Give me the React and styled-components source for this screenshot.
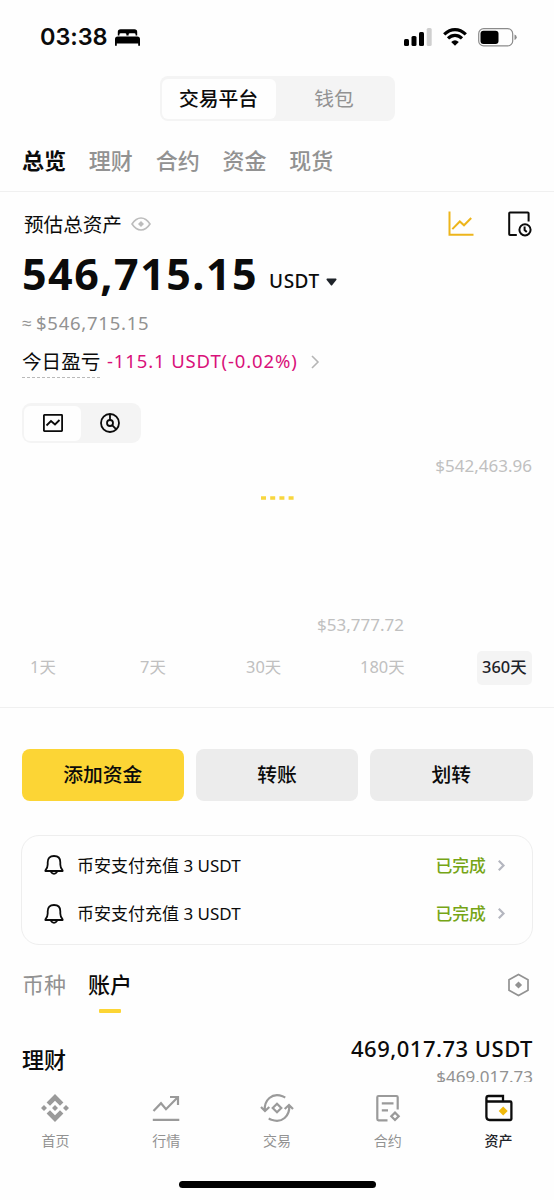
import React from "react";
import styled, { createGlobalStyle } from "styled-components";

const latin = `"Noto Sans", "Noto Sans CJK SC", sans-serif`;
const han = `"Noto Sans CJK SC", sans-serif`;

const GlobalStyle = createGlobalStyle`
  * { box-sizing: border-box; }
  body { margin: 0; background: #fefefe; color: #0b0b0b; font-family: ${han}; }
  svg { display: block; flex: none; overflow: visible; }
`;

const Screen = styled.div`
  width: 554px;
  height: 1200px;
  overflow: hidden;
  display: flex;
  flex-direction: column;
  background: #fefefe;
`;

const Label = styled.span`
  font-family: ${han};
  font-size: ${(p) => p.$size}px;
  font-weight: ${(p) => p.$weight || 400};
  color: ${(p) => p.$color || "#0b0b0b"};
  line-height: 1;
  white-space: nowrap;
`;

const Figure = styled(Label)`
  font-family: ${latin};
  letter-spacing: ${(p) => p.$track || 0}px;
`;

const Approx = styled.span`
  width: 14px;
  font: 400 17px/1 "Liberation Sans", sans-serif;
  color: #929292;
`;

const Unit = styled.div`
  display: flex;
  align-items: center;
  gap: 6px;
  padding-top: 16px;
`;

const StatusBar = styled.header`
  height: 76px;
  flex: none;
  padding: 0 37px 2px 40px;
  display: flex;
  align-items: center;
  justify-content: space-between;
`;

const StatusGroup = styled.div`
  display: flex;
  align-items: center;
  gap: ${(p) => p.$gap}px;
`;

const Clock = styled.span`
  font: 600 23.5px/1 Inter, sans-serif;
  letter-spacing: -0.1px;
`;

const Segment = styled.div`
  width: 235px;
  height: 45px;
  flex: none;
  margin-left: 159.5px;
  padding: 2.5px;
  display: grid;
  grid-template-columns: 114px 1fr;
  border-radius: 8px;
  background: #f4f4f4;
`;

const SegmentItem = styled.div`
  display: flex;
  align-items: center;
  justify-content: center;
  padding: 0 ${(p) => (p.$active ? 1 : 0)}px 2px 0;
  border-radius: 6px;
  background: ${(p) => (p.$active ? "#fefefe" : "transparent")};
`;

const TopTabs = styled.nav`
  height: 71px;
  flex: none;
  padding: 5px 22px 0;
  display: flex;
  align-items: center;
  gap: 22.8px;
  border-bottom: 1px solid #f0f0f0;
`;

const Row = styled.div`
  height: ${(p) => p.$h}px;
  flex: none;
  padding: ${(p) => p.$top || 0}px 22px 0;
  display: flex;
  align-items: center;
`;

const Push = styled.div`
  margin-left: auto;
  padding-top: ${(p) => p.$top || 0}px;
  display: flex;
  align-items: center;
  gap: ${(p) => p.$gap || 0}px;
`;

const Gap = styled.span`
  width: ${(p) => p.$w}px;
  flex: none;
`;

const Underlined = styled.div`
  height: 33px;
  width: 78px;
  display: flex;
  align-items: center;
  border-bottom: 1px dashed #b9b9b9;
`;

const ViewToggle = styled.div`
  width: 119px;
  height: 40px;
  flex: none;
  margin: 25px 0 0 21.5px;
  padding: 2.5px;
  display: grid;
  grid-template-columns: 57px 1fr;
  border-radius: 9px;
  background: #f4f4f4;
`;

const ToggleItem = styled.div`
  display: flex;
  align-items: center;
  justify-content: center;
  border-radius: 6px;
  background: ${(p) => (p.$active ? "#fefefe" : "transparent")};
`;

const Chart = styled.section`
  height: 207.5px;
  flex: none;
  padding: 14px 22px 18px;
  display: flex;
  flex-direction: column;
`;

const ChartMax = styled.div`
  display: flex;
  justify-content: flex-end;
`;

const ChartLine = styled.div`
  flex: 1;
  padding: 22px 0 0 238px;
`;

const ChartMin = styled.div`
  display: flex;
  padding-left: 295px;
`;

const Ranges = styled.div`
  height: 57.5px;
  flex: none;
  padding: 0 21px 0 25px;
  display: grid;
  grid-template-columns: 110px 106px 114px 122px 1fr;
  align-items: start;
  justify-items: start;
  border-bottom: 1px solid #f0f0f0;
`;

const Range = styled.div`
  height: 34px;
  padding: 0 5px;
  display: flex;
  align-items: center;
  border-radius: 5px;
  background: ${(p) => (p.$active ? "#f4f4f4" : "transparent")};
`;

const Actions = styled.div`
  flex: none;
  margin: 41px 21.5px 33.5px;
  display: grid;
  grid-template-columns: repeat(3, 1fr);
  gap: 11.5px;
`;

const ActionButton = styled.button`
  height: 52px;
  padding: 0 0 2px;
  border: 0;
  border-radius: 8px;
  background: ${(p) => (p.$primary ? "#fcd535" : "#ececec")};
`;

const Notices = styled.section`
  height: 110px;
  flex: none;
  margin: 0 21px;
  padding: 5.5px 28px 5.5px 20px;
  border: 1.5px solid #eeeeee;
  border-radius: 18px;
`;

const Notice = styled.div`
  height: 48.5px;
  display: flex;
  align-items: center;
`;

const AccountTabs = styled.nav`
  height: 70px;
  flex: none;
  padding: 26px 24px 0 22px;
  display: flex;
  align-items: flex-start;
  gap: 22px;
`;

const AccountTab = styled.div`
  height: 42px;
  padding-top: 1px;
  display: flex;
  flex-direction: column;
  align-items: center;
  justify-content: space-between;
`;

const Marker = styled.i`
  width: 22px;
  height: 4px;
  border-radius: 1px;
  background: #fcd535;
`;

const Holding = styled.div`
  height: 67px;
  flex: none;
  padding: 22px 21px 0 22px;
  display: flex;
  justify-content: space-between;
  overflow: hidden;
`;

const HoldingName = styled.div`
  padding-top: 10px;
`;

const HoldingValue = styled.div`
  display: flex;
  flex-direction: column;
  align-items: flex-end;
  gap: 9px;
`;

const BottomNav = styled.nav`
  height: 99px;
  flex: none;
  display: grid;
  grid-template-columns: repeat(5, 1fr);
  background: #fefefe;
`;

const NavItem = styled.div`
  padding-top: 11px;
  display: flex;
  flex-direction: column;
  align-items: center;
  gap: 10px;
`;

const HomeBar = styled.div`
  width: 197px;
  height: 7px;
  flex: none;
  align-self: center;
  border-radius: 4px;
  background: #000;
`;

const BedIcon = () => (
  <svg width="25" height="17" viewBox="0 0 25 17" fill="#000">
    <path d="M2.8 6.4V3Q2.8 .2 5.6 .2H19.4Q22.2 .2 22.2 3V6.4H20.6V5.6Q20.6 4.2 19.2 4.2H15Q13.6 4.2 13.6 5.6V6.4H11.4V5.6Q11.4 4.2 10 4.2H5.8Q4.4 4.2 4.4 5.6V6.4Z" />
    <path d="M0 10.2Q0 7.6 2.6 7.6H22.4Q25 7.6 25 10.2V16.8H23.2V14.6H1.8V16.8H0Z" />
  </svg>
);

const SignalIcon = () => (
  <svg width="28" height="18" viewBox="0 0 28 18">
    <rect x="0" y="11" width="5" height="7" rx="1.5" />
    <rect x="7.5" y="8" width="5" height="10" rx="1.5" />
    <rect x="15" y="4" width="5" height="14" rx="1.5" />
    <rect x="22.7" y="0" width="5" height="18" rx="1.5" fill="#cfcfcf" />
  </svg>
);

const WifiIcon = () => (
  <svg width="24" height="18" viewBox="0 0 24 18" fill="none" stroke="#000" strokeWidth="3.2">
    <path d="M1.2 6.3Q6.2 1.6 12 1.6T22.8 6.3" />
    <path d="M5 10.4Q8.2 7.4 12 7.4T19 10.4" />
    <path d="M8.2 14Q12 10.7 15.8 14L12 17.8Z" fill="#000" stroke="none" />
  </svg>
);

const BatteryIcon = () => (
  <svg width="39" height="19" viewBox="0 0 39 19">
    <rect x=".7" y=".7" width="34" height="17.2" rx="5" fill="none" stroke="#8b8b8b" strokeWidth="1.2" />
    <rect x="2.5" y="2.7" width="18" height="13.2" rx="3" />
    <path d="M36.5 6.5Q38.7 7.3 38.7 9.3T36.5 12Z" fill="#8b8b8b" />
  </svg>
);

const EyeIcon = () => (
  <svg width="20" height="14" viewBox="0 0 20 14" fill="none" stroke="#bcbcbc" strokeWidth="1.6">
    <path d="M1 7Q5 1 10 1T19 7Q15 13 10 13T1 7Z" />
    <path d="M10 4L13 7L10 10L7 7Z" fill="#bcbcbc" stroke="none" />
  </svg>
);

const LineChartIcon = () => (
  <svg width="26" height="26" viewBox="0 0 26 26" fill="none" stroke="#edb51c" strokeWidth="2">
    <path d="M1.5 .5V23.7H25.5M4.3 18.1L11.8 10.5L16 14.3L23.2 7" />
  </svg>
);

const HistoryIcon = () => (
  <svg width="24" height="26" viewBox="0 0 24 26" fill="none" stroke="#0b0b0b" strokeWidth="2">
    <path d="M8.8 24H2Q1.2 24 1.2 23.2V2.3Q1.2 1.5 2 1.5H19.8Q20.6 1.5 20.6 2.3V10.5" />
    <circle cx="17" cy="18.8" r="5.6" />
    <path d="M16.6 15.5V19.1L18.8 21.1" />
  </svg>
);

const Caret = () => (
  <svg width="11" height="8" viewBox="0 0 11 8" fill="#1e2329">
    <path d="M1 .5H10Q11 1 10.3 2L6.3 7Q5.5 8 4.7 7L.7 2Q0 1 1 .5Z" />
  </svg>
);

const Chevron = ({ h, color, weight }) => (
  <svg width={h * 0.57} height={h} viewBox="0 0 8 14" fill="none" stroke={color} strokeWidth={weight}>
    <path d="M1 1L7 7L1 13" />
  </svg>
);

const BoxChartIcon = () => (
  <svg width="20" height="18" viewBox="0 0 20 18" fill="none" stroke="#0b0b0b" strokeWidth="1.8">
    <rect x=".9" y=".9" width="18.2" height="16.2" rx=".5" />
    <path d="M3.5 11.5L8 7L12 10.5L16.5 6" />
  </svg>
);

const PieIcon = () => (
  <svg width="20" height="20" viewBox="0 0 20 20" fill="none" stroke="#0b0b0b" strokeWidth="1.8">
    <circle cx="10" cy="10" r="9" />
    <circle cx="10" cy="10" r="3" />
    <path d="M10 1V7M12.1 12.1L16.3 16.4" />
  </svg>
);

const BellIcon = () => (
  <svg width="20" height="20" viewBox="0 0 20 20" fill="none" stroke="#0b0b0b" strokeWidth="1.8" strokeLinejoin="round">
    <path d="M1.4 15.3Q3.7 13 3.7 9.5V7.2Q3.7 1 10 1T16.3 7.2V9.5Q16.3 13 18.6 15.3V16H1.4Z" />
    <path d="M6.5 16.3Q10 21.5 13.5 16.3" />
  </svg>
);

const HexIcon = () => (
  <svg width="22" height="24" viewBox="0 0 22 24" fill="none" stroke="#929292" strokeWidth="1.7">
    <path d="M10.5 1.5L20 6.7V17.3L10.5 22.5L1 17.3V6.7Z" />
    <path d="M10.5 8.4L14.1 12L10.5 15.6L6.9 12Z" fill="#929292" stroke="none" />
  </svg>
);

const HomeIcon = () => (
  <svg width="28" height="30" viewBox="0 0 28 30" fill="#9a9a9a">
    <path d="M14 1L22.4 9.4L19 12.8L14 7.8L9 12.8L5.6 9.4ZM14 29L22.4 20.6L19 17.2L14 22.2L9 17.2L5.6 20.6ZM0 15L3 12L6 15L3 18ZM11 15L14 12L17 15L14 18ZM22 15L25 12L28 15L25 18Z" />
  </svg>
);

const MarketIcon = () => (
  <svg width="28" height="30" viewBox="0 0 28 30" fill="none" stroke="#9a9a9a" strokeWidth="2.2">
    <path d="M1.5 18L9 10.2L14 16.2L25.5 4.5M18 4H26V12M.8 26.8H27.3" />
  </svg>
);

const TradeIcon = () => (
  <svg width="34" height="30" viewBox="0 0 34 30" fill="none" stroke="#9a9a9a" strokeWidth="2.2">
    <path d="M4.8 17.5Q4.2 9.5 9.4 5T22.5 3.2Q24 3.8 25.2 4.7M1 14L5 18L9.3 14" />
    <path d="M29.2 12.5Q29.8 20.5 24.6 25T11.5 26.8Q10 26.2 8.8 25.3M24.7 16L29 12L33 16" />
    <path d="M17 10.7L21.3 15L17 19.3L12.7 15Z" />
  </svg>
);

const ContractIcon = () => (
  <svg width="28" height="30" viewBox="0 0 28 30" fill="none" stroke="#9a9a9a" strokeWidth="2.2">
    <path d="M13.5 27.3H4.5Q3.3 27.3 3.3 26.1V4.2Q3.3 3 4.5 3H22.5Q23.7 3 23.7 4.2V16.5M7.8 10.3H19.5M7.8 17.3H14" />
    <path d="M21 19.6L24.7 23.3L21 27L17.3 23.3Z" />
  </svg>
);

const WalletIcon = () => (
  <svg width="28" height="30" viewBox="0 0 28 30" fill="none" stroke="#0b0b0b" strokeWidth="2.3">
    <path d="M1.4 9V5.2Q1.4 3 3.6 3H18V8.5M1.4 6.5Q1.4 8.5 3.6 8.5H25.2Q26.4 8.5 26.4 9.7V26Q26.4 27 25.4 27H4.6Q1.4 27 1.4 23.8V6" />
    <path d="M18.2 13.5L22.7 18L18.2 22.5L13.7 18Z" fill="#f0b90b" stroke="none" />
  </svg>
);

const gray = "#929292";
const pale = "#c0c0c0";
const topTabs = ["总览", "理财", "合约", "资金", "现货"];
const ranges = ["1天", "7天", "30天", "180天", "360天"];
const navItems = [
  ["首页", HomeIcon],
  ["行情", MarketIcon],
  ["交易", TradeIcon],
  ["合约", ContractIcon],
  ["资产", WalletIcon],
];

export default function App() {
  return (
    <Screen>
      <GlobalStyle />
      <StatusBar>
        <StatusGroup $gap={8}>
          <Clock>03:38</Clock>
          <BedIcon />
        </StatusGroup>
        <StatusGroup $gap={11}>
          <SignalIcon />
          <WifiIcon />
          <BatteryIcon />
        </StatusGroup>
      </StatusBar>

      <Segment>
        <SegmentItem $active>
          <Label $size={19.8} $weight={500}>交易平台</Label>
        </SegmentItem>
        <SegmentItem>
          <Label $size={19.8} $color={gray}>钱包</Label>
        </SegmentItem>
      </Segment>

      <TopTabs>
        {topTabs.map((t, i) => (
          <Label key={t} $size={22} $weight={i ? 500 : 700} $color={i ? gray : undefined}>{t}</Label>
        ))}
      </TopTabs>

      <Row $h={64}>
        <Gap $w={2} />
        <Label $size={19.6}>预估总资产</Label>
        <Gap $w={9} />
        <EyeIcon />
        <Push $gap={34}>
          <LineChartIcon />
          <HistoryIcon />
        </Push>
      </Row>
      <Row $h={35}>
        <Figure $size={43} $weight={700} $track={1.5}>546,715.15</Figure>
        <Gap $w={11} />
        <Unit>
          <Figure $size={19} $weight={500} $track={0.5}>USDT</Figure>
          <Caret />
        </Unit>
      </Row>
      <Row $h={54} $top={11}>
        <Approx>≈</Approx>
        <Figure $size={18.5} $color={gray} $track={0.75}>$546,715.15</Figure>
      </Row>
      <Row $h={33}>
        <Underlined>
          <Label $size={19.6}>今日盈亏</Label>
        </Underlined>
        <Gap $w={7} />
        <Figure $size={18.5} $color="#d9117a" $track={0.87}>-115.1 USDT(-0.02%)</Figure>
        <Gap $w={13.5} />
        <Chevron h={14} color="#b5b5b5" weight={1.6} />
      </Row>

      <ViewToggle>
        <ToggleItem $active><BoxChartIcon /></ToggleItem>
        <ToggleItem><PieIcon /></ToggleItem>
      </ViewToggle>

      <Chart>
        <ChartMax><Figure $size={17} $color={pale}>$542,463.96</Figure></ChartMax>
        <ChartLine>
          <svg width="34" height="4" viewBox="0 0 34 4">
            <path d="M1 2H34" fill="none" stroke="#f8d63e" strokeWidth="3.5" strokeDasharray="5 4.2" />
          </svg>
        </ChartLine>
        <ChartMin><Figure $size={17} $color={pale}>$53,777.72</Figure></ChartMin>
      </Chart>

      <Ranges>
        {ranges.map((r, i) => (
          <Range key={r} $active={i === 4}>
            <Figure $size={16.4} $weight={i === 4 ? 500 : 400} $color={i === 4 ? "#1e2329" : pale}>{r}</Figure>
          </Range>
        ))}
      </Ranges>

      <Actions>
        <ActionButton $primary><Label $size={19.8} $weight={500}>添加资金</Label></ActionButton>
        <ActionButton><Label $size={19.8} $weight={500}>转账</Label></ActionButton>
        <ActionButton><Label $size={19.8} $weight={500}>划转</Label></ActionButton>
      </Actions>

      <Notices>
        {[0, 1].map((n) => (
          <Notice key={n}>
            <Gap $w={2} />
            <BellIcon />
            <Gap $w={13} />
            <Figure $size={17}>币安支付充值 3 USDT</Figure>
            <Push $gap={12}>
              <Label $size={16.8} $weight={500} $color="#76a516">已完成</Label>
              <Chevron h={11} color="#b4b6bf" weight={2.8} />
            </Push>
          </Notice>
        ))}
      </Notices>

      <AccountTabs>
        <AccountTab><Label $size={22} $color={gray}>币种</Label></AccountTab>
        <AccountTab>
          <Label $size={22} $weight={500}>账户</Label>
          <Marker />
        </AccountTab>
        <Push $top={2}><HexIcon /></Push>
      </AccountTabs>

      <Holding>
        <HoldingName><Label $size={22} $weight={500}>理财</Label></HoldingName>
        <HoldingValue>
          <Figure $size={22} $weight={500} $track={0.5}>469,017.73 USDT</Figure>
          <Figure $size={17} $color={gray}>$469,017.73</Figure>
        </HoldingValue>
      </Holding>

      <BottomNav>
        {navItems.map(([name, Icon], i) => (
          <NavItem key={name}>
            <Icon />
            <Label $size={14} $color={i === 4 ? "#1e2329" : gray} $weight={i === 4 ? 500 : 400}>{name}</Label>
          </NavItem>
        ))}
      </BottomNav>
      <HomeBar />
    </Screen>
  );
}
